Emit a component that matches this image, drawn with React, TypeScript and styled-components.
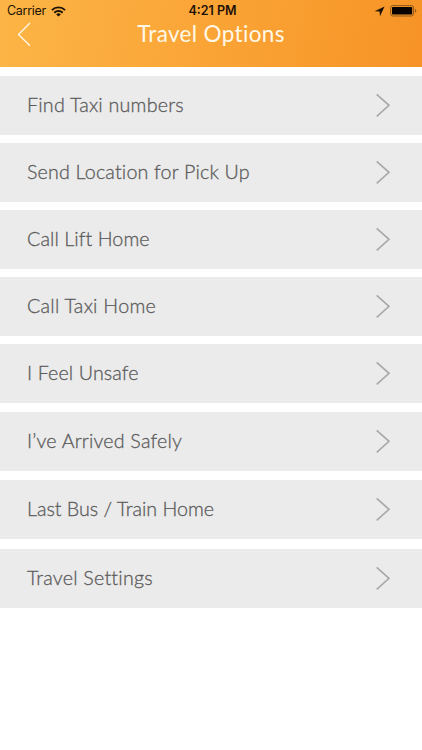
import React from "react";
import styled, { createGlobalStyle } from "styled-components";

const GlobalStyle = createGlobalStyle`
  * { box-sizing: border-box; }
  body { margin: 0; background: #fff; }
`;

const Screen = styled.div`
  width: 422px;
  height: 750px;
  overflow: hidden;
  background: #fff;
  font-family: Lato, sans-serif;
`;

const Header = styled.header`
  height: 67px;
  background: linear-gradient(100deg, #fcb546 0%, #faa436 50%, #f79326 100%);
`;

const StatusBar = styled.div`
  height: 22px;
  padding: 0 5px 0 7px;
  display: grid;
  grid-template-columns: 1fr auto 1fr;
  align-items: center;
  font: 400 12.5px/22px Inter, sans-serif;
  color: #1c1206;
`;

const Carrier = styled.div`
  display: flex;
  align-items: center;
  gap: 5px;
  letter-spacing: -0.3px;
`;

const Clock = styled.div`
  padding-left: 1px;
  font-weight: 600;
  letter-spacing: 0;
`;

const Indicators = styled.div`
  display: flex;
  align-items: center;
  justify-content: flex-end;
  gap: 5px;
`;

const NavBar = styled.div`
  height: 25px;
  display: grid;
  grid-template-columns: 48px 1fr 48px;
  align-items: center;
`;

const BackButton = styled.button`
  border: 0;
  padding: 0 0 0 17px;
  background: none;
  display: flex;
`;

const Title = styled.h1<{ $spacing: number }>`
  margin: 0;
  font-size: 22.5px;
  line-height: 23px;
  padding-bottom: 2px;
  font-weight: 400;
  letter-spacing: ${(p) => p.$spacing}px;
  text-align: center;
  white-space: nowrap;
  color: #fff8e6;
`;

const List = styled.nav`
  padding-top: 9px;
`;

const Row = styled.a<{ $gap: number }>`
  height: 59px;
  margin-bottom: ${(p) => p.$gap}px;
  padding: 0 31px 0 27px;
  display: flex;
  align-items: center;
  justify-content: space-between;
  background: #ebebeb;
`;

const Label = styled.span<{ $spacing: number }>`
  padding-bottom: 1px;
  font-size: 19.7px;
  line-height: 24px;
  font-weight: 300;
  letter-spacing: ${(p) => p.$spacing}px;
  white-space: nowrap;
  color: #5c5c5c;
  -webkit-text-stroke: 0.3px #5c5c5c;
`;

const options = [
  { label: "Find Taxi numbers", spacing: 0.21, gap: 8 },
  { label: "Send Location for Pick Up", spacing: 0.17, gap: 8 },
  { label: "Call Lift Home", spacing: 0.07, gap: 8 },
  { label: "Call Taxi Home", spacing: 0.25, gap: 8 },
  { label: "I Feel Unsafe", spacing: 0.11, gap: 9 },
  { label: "I’ve Arrived Safely", spacing: 0.18, gap: 9 },
  { label: "Last Bus / Train Home", spacing: -0.02, gap: 10 },
  { label: "Travel Settings", spacing: 0.22, gap: 0 },
];

const Wifi = () => (
  <svg width="15" height="11" viewBox="0 0 15 11" fill="none" stroke="#1c1206" strokeWidth="1.9">
    <path d="M.9 4.1a9.4 9.4 0 0 1 13.2 0M3.3 6.7a6 6 0 0 1 8.4 0" />
    <path d="M7.5 10.6 5.2 8.4a3.3 3.3 0 0 1 4.6 0Z" fill="#1c1206" stroke="none" />
  </svg>
);

const LocationArrow = () => (
  <svg width="11" height="11" viewBox="0 0 11 11">
    <path d="M10.6.6 6 10.3 5.6 5.6.6 5.2Z" fill="#1c1206" />
  </svg>
);

const Battery = () => (
  <svg width="27" height="12" viewBox="0 0 27 12">
    <rect x=".6" y=".6" width="23" height="10.4" rx="2.3" fill="none" stroke="#8e5818" />
    <rect x="2" y="2" width="20.2" height="7.6" rx=".8" fill="#080300" />
    <path d="M25 4v3.8c1.8-.6 1.8-3.2 0-3.8Z" fill="#8e5818" />
  </svg>
);

const BackChevron = () => (
  <svg width="15" height="25" viewBox="0 0 15 25" fill="none" stroke="#fff8e6" strokeWidth="1.35">
    <path d="M13 1 1.5 12.4 13 23.8" />
  </svg>
);

const Chevron = () => (
  <svg width="15" height="25" viewBox="0 0 15 25" fill="none" stroke="#a8a8a8" strokeWidth="1.6">
    <path d="M.7 1.3 13 12.3.7 23.3" />
  </svg>
);

export default function App() {
  return (
    <Screen>
      <GlobalStyle />
      <Header>
        <StatusBar>
          <Carrier>
            Carrier
            <Wifi />
          </Carrier>
          <Clock>4:21 PM</Clock>
          <Indicators>
            <LocationArrow />
            <Battery />
          </Indicators>
        </StatusBar>
        <NavBar>
          <BackButton aria-label="Back">
            <BackChevron />
          </BackButton>
          <Title $spacing={0.35}>Travel Options</Title>
        </NavBar>
      </Header>
      <List>
        {options.map((o) => (
          <Row key={o.label} $gap={o.gap}>
            <Label $spacing={o.spacing}>{o.label}</Label>
            <Chevron />
          </Row>
        ))}
      </List>
    </Screen>
  );
}
